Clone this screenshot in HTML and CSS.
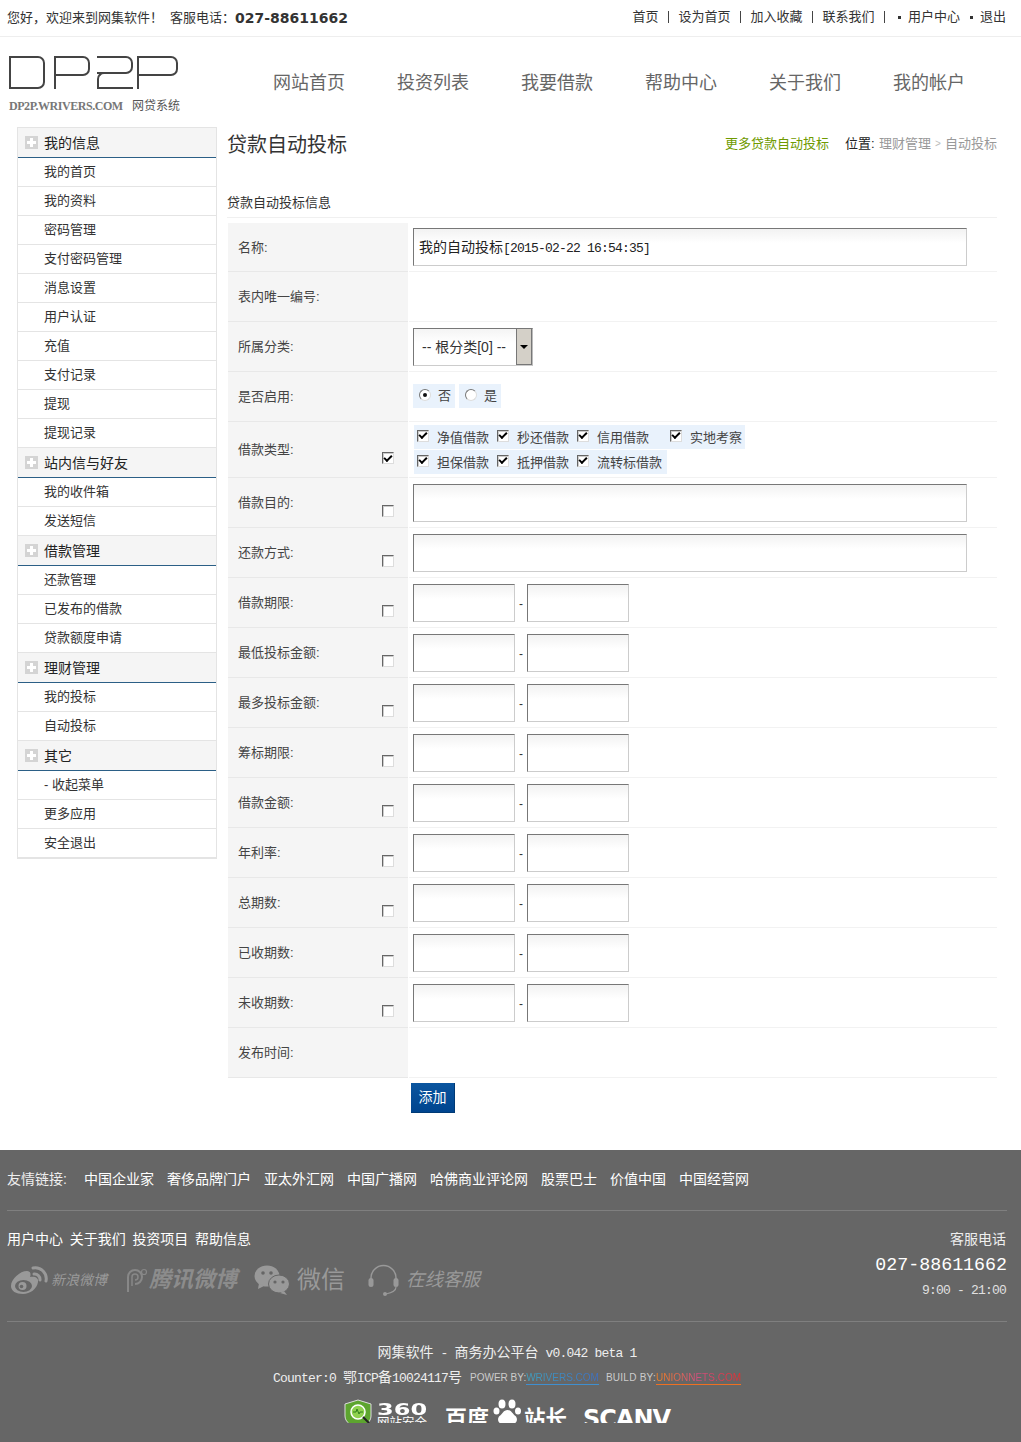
FILE: index.html
```html
<!DOCTYPE html>
<html lang="zh-CN">
<head>
<meta charset="utf-8">
<title>贷款自动投标</title>
<link rel="stylesheet" href="styles.css">
</head>
<body>
<div class="topbar">
  <div class="welcome"><span>您好&#xFF0C;欢迎来到网集软件&#xFF01;</span><span class="tel-label">客服电话&#xFF1A;</span><b class="tel">027-88611662</b></div>
  <div class="toplinks"><a>首页</a><i></i><a>设为首页</a><i></i><a>加入收藏</a><i></i><a>联系我们</a><i></i><a class="dot">用户中心</a><a class="dot">退出</a></div>
</div>
<header class="header">
  <div class="logo">
    <div class="mark" role="img" aria-label="DP2P">
      <span class="l-d"></span>
      <span class="l-p"><span></span></span>
      <span class="l-2"><span class="t"></span><span class="b"></span></span>
      <span class="l-p wide"><span></span></span>
    </div>
    <div class="logo-sub"><b>DP2P.WRIVERS.COM</b><span>网贷系统</span></div>
  </div>
  <nav class="nav"><a>网站首页</a><a>投资列表</a><a>我要借款</a><a>帮助中心</a><a>关于我们</a><a>我的帐户</a></nav>
</header>
<div class="content">
  <aside class="side">
    <h3><i></i>我的信息</h3>
    <a>我的首页</a><a>我的资料</a><a>密码管理</a><a>支付密码管理</a><a>消息设置</a><a>用户认证</a><a>充值</a><a>支付记录</a><a>提现</a><a>提现记录</a>
    <h3><i></i>站内信与好友</h3>
    <a>我的收件箱</a><a>发送短信</a>
    <h3><i></i>借款管理</h3>
    <a>还款管理</a><a>已发布的借款</a><a>贷款额度申请</a>
    <h3 class="teal"><i></i>理财管理</h3>
    <a>我的投标</a><a>自动投标</a>
    <h3 class="teal"><i></i>其它</h3>
    <a>- 收起菜单</a><a>更多应用</a><a>安全退出</a>
  </aside>
  <main class="main">
    <div class="pagehead">
      <h1>贷款自动投标</h1>
      <div class="crumbs"><a class="more">更多贷款自动投标</a><span class="pos">位置:</span><a>理财管理</a><em>&gt;</em><a>自动投标</a></div>
    </div>
    <h2 class="sect">贷款自动投标信息</h2>
    <form class="form">
      <div class="row"><div class="lab">名称:</div><div class="val"><div class="txt long mixed">我的自动投标<span class="mono">[2015-02-22 16:54:35]</span></div></div></div>
      <div class="row"><div class="lab">表内唯一编号:</div><div class="val"></div></div>
      <div class="row"><div class="lab">所属分类:</div><div class="val"><div class="sel"><select><option>-- 根分类[0] --</option></select><span class="arrow"></span></div></div></div>
      <div class="row"><div class="lab">是否启用:</div><div class="val radios"><label class="opt"><input type="radio" name="on" checked>否</label><label class="opt"><input type="radio" name="on">是</label></div></div>
      <div class="row tall"><div class="lab">借款类型:<input class="pick" type="checkbox" checked></div>
        <div class="val checks">
          <div class="cline"><label class="cb"><input type="checkbox" checked>净值借款</label><label class="cb"><input type="checkbox" checked>秒还借款</label><label class="cb w93"><input type="checkbox" checked>信用借款</label><label class="cb end"><input type="checkbox" checked>实地考察</label></div>
          <div class="cline"><label class="cb"><input type="checkbox" checked>担保借款</label><label class="cb"><input type="checkbox" checked>抵押借款</label><label class="cb"><input type="checkbox" checked>流转标借款</label></div>
        </div>
      </div>
      <div class="row"><div class="lab">借款目的:<input class="pick" type="checkbox"></div><div class="val"><input class="txt long" type="text"></div></div>
      <div class="row"><div class="lab">还款方式:<input class="pick" type="checkbox"></div><div class="val"><input class="txt long" type="text"></div></div>
      <div class="row"><div class="lab">借款期限:<input class="pick" type="checkbox"></div><div class="val"><input class="txt" type="text"><span class="dash">-</span><input class="txt" type="text"></div></div>
      <div class="row"><div class="lab">最低投标金额:<input class="pick" type="checkbox"></div><div class="val"><input class="txt" type="text"><span class="dash">-</span><input class="txt" type="text"></div></div>
      <div class="row"><div class="lab">最多投标金额:<input class="pick" type="checkbox"></div><div class="val"><input class="txt" type="text"><span class="dash">-</span><input class="txt" type="text"></div></div>
      <div class="row"><div class="lab">筹标期限:<input class="pick" type="checkbox"></div><div class="val"><input class="txt" type="text"><span class="dash">-</span><input class="txt" type="text"></div></div>
      <div class="row"><div class="lab">借款金额:<input class="pick" type="checkbox"></div><div class="val"><input class="txt" type="text"><span class="dash">-</span><input class="txt" type="text"></div></div>
      <div class="row"><div class="lab">年利率:<input class="pick" type="checkbox"></div><div class="val"><input class="txt" type="text"><span class="dash">-</span><input class="txt" type="text"></div></div>
      <div class="row"><div class="lab">总期数:<input class="pick" type="checkbox"></div><div class="val"><input class="txt" type="text"><span class="dash">-</span><input class="txt" type="text"></div></div>
      <div class="row"><div class="lab">已收期数:<input class="pick" type="checkbox"></div><div class="val"><input class="txt" type="text"><span class="dash">-</span><input class="txt" type="text"></div></div>
      <div class="row"><div class="lab">未收期数:<input class="pick" type="checkbox"></div><div class="val"><input class="txt" type="text"><span class="dash">-</span><input class="txt" type="text"></div></div>
      <div class="row"><div class="lab">发布时间:</div><div class="val"></div></div>
      <button class="submit" type="button">添加</button>
    </form>
  </main>
</div>
<footer class="footer">
  <div class="friends"><span class="f-title">友情链接:</span><a>中国企业家</a><a>奢侈品牌门户</a><a>亚太外汇网</a><a>中国广播网</a><a>哈佛商业评论网</a><a>股票巴士</a><a>价值中国</a><a>中国经营网</a></div>
  <div class="mid">
    <div class="mid-left">
      <div class="flinks"><a>用户中心</a><a>关于我们</a><a>投资项目</a><a>帮助信息</a></div>
      <div class="social">
        <svg class="ic-weibo" width="38" height="30" viewBox="0 0 38 30"><path d="M1 21c0-7 9-15 16-15 4 0 4 4 3 6 5-1 9 1 8 5-1 7-8 12-15 12C6 29 1 26 1 21z" fill="#999"/><ellipse cx="13.500" cy="21" rx="8.500" ry="6" fill="#666"/><circle cx="12.500" cy="21" r="4" fill="#999"/><circle cx="11.500" cy="21.500" r="1.800" fill="#666"/><path d="M23 3a11 11 0 0 1 13 13M24 9a5.500 5.500 0 0 1 6 6" fill="none" stroke="#999" stroke-width="3" stroke-linecap="round"/></svg>
        <span class="s-weibo">新浪微博</span>
        <svg class="ic-qq" width="24" height="26" viewBox="0 0 24 26"><path d="M4 25V10a7 7 0 1 1 7 7" fill="none" stroke="#888" stroke-width="2"/><path d="M8 19V10a3 3 0 1 1 3 3" fill="none" stroke="#888" stroke-width="1.500"/><circle cx="20" cy="5" r="2.500" fill="none" stroke="#888" stroke-width="1.200"/></svg>
        <span class="s-qq">腾讯微博</span>
        <svg class="ic-wx" width="36" height="32" viewBox="0 0 36 32"><ellipse cx="13" cy="12" rx="12.500" ry="10.500" fill="#999"/><path d="M5 19l-1 6 6-3z" fill="#999"/><ellipse cx="25" cy="20" rx="10.500" ry="9" stroke="#666" fill="#999"/><path d="M30 27l3 4-7-2z" fill="#999"/><circle cx="9" cy="9" r="1.800" fill="#666"/><circle cx="17" cy="9" r="1.800" fill="#666"/><circle cx="21" cy="18" r="1.600" fill="#666"/><circle cx="29" cy="18" r="1.600" fill="#666"/></svg>
        <span class="s-wx">微信</span>
        <svg class="ic-hs" width="31" height="32" viewBox="0 0 31 32"><path d="M3 17V14a12.500 12.500 0 0 1 25 0v3" fill="none" stroke="#999" stroke-width="1.500"/><rect x="0.500" y="14" width="5" height="9" rx="2.500" fill="#999"/><rect x="25.500" y="14" width="5" height="9" rx="2.500" fill="#999"/><path d="M28 23c0 4-5 6-10 7" fill="none" stroke="#999" stroke-width="1.200"/><circle cx="17" cy="30" r="2" fill="#999"/></svg>
        <span class="s-hs">在线客服</span>
      </div>
    </div>
    <div class="mid-right"><div class="kf">客服电话</div><div class="kf-num">027-88611662</div><div class="kf-time">9:00 - 21:00</div></div>
  </div>
  <div class="copy">网集软件<span class="mono"> - </span>商务办公平台<span class="mono"> v0.042 beta 1</span></div>
  <div class="counter"><span class="cnt"><span class="mono">Counter:0 </span>鄂<span class="mono">ICP</span>备<span class="mono">10024117</span>号</span><span class="by">POWER BY:</span><a class="wr">WRIVERS.COM</a><span class="by by2">BUILD BY:</span><a class="un">UNIONNETS.COM</a></div>
  <div class="badges">
    <svg width="28" height="28" viewBox="0 0 28 28"><path d="M14 1l13 4v12c0 6-6 10-13 12C7 27 1 23 1 17V5z" fill="#5da52f" stroke="#dcdcdc"/><circle cx="14" cy="13" r="7" fill="#8fd14f" stroke="#fff" stroke-width="1.500"/><path d="M9 13h3l1-3 2 5 1-2h3" fill="none" stroke="#2f7d1c"/><path d="M19 18l6 6" stroke="#222" stroke-width="2"/></svg>
    <div class="b360"><b>360</b><span>网站安全</span></div>
    <b class="bd">百度</b>
    <svg class="paw" width="29" height="28" viewBox="0 0 29 28"><ellipse cx="9" cy="5" rx="3.500" ry="4.500" fill="#fff"/><ellipse cx="19" cy="5" rx="3.500" ry="4.500" fill="#fff"/><ellipse cx="3.500" cy="12" rx="3" ry="3.500" fill="#fff"/><ellipse cx="25" cy="12" rx="3" ry="3.500" fill="#fff"/><path d="M14.500 11c4 0 5 4 8 6 3 3 1 8-3 8-2 0-3-1-5-1s-3 1-5 1c-4 0-6-5-3-8 3-2 4-6 8-6z" fill="#fff"/></svg>
    <b class="zz">站长</b>
    <b class="scan">SCANV</b>
  </div>
</footer>
</body>
</html>
```
FILE: styles.css
```css
* { box-sizing: border-box; }
html, body { margin: 0; padding: 0; }
body {
  background: #fff;
  color: #333;
  font: 13px/20px "Liberation Sans", "Noto Sans CJK SC", sans-serif;
  height: 1442px;
  overflow: hidden;
}
a { color: inherit; text-decoration: none; }
.mono { font-family: "Liberation Mono", monospace; font-size: 13px; letter-spacing: -.8px; white-space: pre; }

/* top bar */
.topbar {
  height: 37px;
  border-bottom: 1px solid #eee;
  display: flex;
  justify-content: space-between;
  align-items: center;
  padding: 0 15px 0 7px;
}
.welcome { display: flex; align-items: center; }
.tel-label { margin-left: 7px; }
.tel { font: bold 14px/20px "DejaVu Sans", sans-serif; color: #333; }
.toplinks { display: flex; align-items: center; margin-top: -2px; }
.toplinks i { width: 1px; height: 12px; background: #444; margin: 0 9.500px; }
.toplinks .dot { display: flex; align-items: center; margin-left: 10px; }
.toplinks .dot::before { content: ""; width: 3px; height: 3px; background: #333; margin-right: 7px; }
.toplinks i + .dot { margin-left: 3.500px; }

/* header */
.header { height: 90px; display: flex; }
.logo { width: 273px; padding: 19px 0 0 9px; flex: none; }
.mark { display: flex; height: 33px; color: #444; }
.mark span { display: block; }
.l-d { width: 36px; height: 33px; border: 2px solid #444; border-radius: 0 7px 7px 0; margin-right: 9px; }
.l-p { width: 36px; height: 33px; border-left: 2px solid #444; margin-right: 7px; }
.l-p > span { height: 20px; border: solid #444; border-width: 2px 2px 2px 0; border-radius: 0 7px 7px 0; }
.l-p.wide { width: 41px; margin-right: 0; }
.l-2 { width: 36px; margin-right: 4px; }
.l-2 .t { height: 18px; border: solid #444; border-width: 2px 2px 2px 0; border-radius: 0 7px 7px 0; }
.l-2 .b { height: 17px; margin-top: -2px; border-bottom: 2px solid #444; }
.l-2 .b::before { content: ""; display: block; width: 20px; height: 15px; border: solid #444; border-width: 2px 0 0 2px; border-radius: 7px 0 0 0; }
.logo-sub { display: flex; align-items: center; margin-top: 9px; height: 16px; color: #555; }
.logo-sub b { font: bold 12px/16px "Liberation Serif", serif; color: #777; width: 123px; white-space: nowrap; letter-spacing: -.45px; }
.logo-sub span { font-size: 12px; }
.nav { display: flex; gap: 52px; padding-top: 34px; font-size: 18px; line-height: 24px; color: #666; }

/* content */
.content { display: flex; padding-left: 17px; align-items: flex-start; height: 1023px; }
.side { width: 200px; flex: none; border: 1px solid #e4e4e4; border-bottom-width: 2px; }
.side h3 {
  margin: 0;
  height: 30px;
  background: #f5f5f5;
  border-bottom: 1px solid #2b5f86;
  font-size: 14px;
  font-weight: normal;
  color: #222;
  display: flex;
  align-items: center;
  padding-left: 7px;
}
.side h3 i {
  width: 13px; height: 13px; margin-right: 6px; flex: none;
  background:
    linear-gradient(#fff, #fff) center / 9px 3px no-repeat,
    linear-gradient(#fff, #fff) center / 3px 9px no-repeat,
    #d4d4d4;
}
.side a { display: block; height: 29px; line-height: 28px; padding-left: 26px; border-bottom: 1px solid #e4e4e4; }
.side a:last-child { border-bottom: 0; height: 28px; }

.main { width: 770px; margin-left: 10px; flex: none; }
.pagehead { height: 60px; display: flex; justify-content: space-between; align-items: flex-start; }
.pagehead h1 { margin: 0; font-size: 20px; line-height: 36px; font-weight: normal; color: #333; }
.crumbs { display: flex; color: #999; line-height: 34px; white-space: nowrap; }
.crumbs .more { color: #6f9a00; margin-right: 16px; }
.crumbs .pos { color: #222; width: 34px; }
.crumbs em { font-style: normal; font-size: 10px; color: #bbb; width: 14px; text-align: center; }
.sect { margin: 0; height: 31px; line-height: 32px; font-size: 13px; font-weight: normal; color: #333; border-bottom: 1px solid #f0f0f0; }
.form { margin: 4px 0 0 1px; }
.row { display: flex; height: 50px; }
.row.tall { height: 56px; }
.row:first-child .lab { border-top: 1px solid #fff; }
.lab {
  width: 180px; flex: none;
  background: #f5f5f5;
  border-bottom: 1px solid #e8e8e8;
  padding: 1px 14px 0 10px;
  display: flex;
  justify-content: space-between;
  align-items: center;
  color: #444;
}
.val { flex: 1; margin-left: 1px; padding: 6px 0 0 4px; border-bottom: 1px solid #f2f2f2; display: flex; align-items: flex-start; }
input, select, button { font-family: inherit; margin: 0; }
.txt {
  width: 102px; height: 38px;
  border: 1px solid; border-color: #777 #ccc #ccc #777;
  background: linear-gradient(#f2f2f2, #fff 14px);
  padding: 0 5px;
  font-size: 14px;
  color: #222;
  border-radius: 0;
  outline: 0;
}
.txt.long { width: 554px; }
.txt.mixed { line-height: 36px; white-space: nowrap; }
.dash { width: 12px; text-align: center; line-height: 40px; font-size: 12px; }
.sel { width: 120px; height: 38px; display: flex; border: 1px solid; border-color: #777 #bbb #ccc #777; }
.sel select {
  flex: 1; min-width: 0;
  appearance: none; border: 0; background: linear-gradient(#f4f4f4, #fff 14px);
  font-size: 14px; padding-left: 8px; color: #333; border-radius: 0; outline: 0;
}
.arrow {
  width: 16px; background: #d4d0c8; flex: none;
  border-left: 1px solid #777; border-right: 1px solid #777; border-bottom: 1px solid #777;
  display: flex; align-items: center; justify-content: center;
}
.arrow::after { content: ""; border: 4px solid transparent; border-top: 4px solid #000; margin-top: 4px; }

.radios { gap: 4px; padding-top: 12px; }
.opt { width: 42px; height: 24px; background: #e9f2fc; display: flex; align-items: center; padding-left: 6px; gap: 7px; color: #444; }
.opt input {
  appearance: none; width: 12px; height: 12px; border-radius: 50%;
  border: 1px solid; border-color: #777 #ddd #ddd #777; background: #fff; flex: none;
  display: flex; align-items: center; justify-content: center; margin-top: -3px;
}
.opt input:checked::after { content: ""; width: 4px; height: 4px; border-radius: 50%; background: #111; }
input[type="checkbox"] {
  appearance: none; width: 12px; height: 12px; flex: none;
  border: 1px solid; border-color: #666 #ddd #ddd #666; background: #fff; box-shadow: inset 1px 1px 0 #ccc;
  display: flex; align-items: center; justify-content: center;
}
input[type="checkbox"]:checked::after {
  content: ""; width: 6px; height: 3px; border: solid #000; border-width: 0 0 2px 2px;
  transform: rotate(-45deg); margin-top: -2px;
}
.pick { margin-top: 16px; }
.checks { flex-direction: column; padding: 3px 0 0 5px; gap: 1px; }
.cline { display: flex; height: 24px; background: #e9f2fc; }
.cb { display: flex; align-items: center; padding: 1px 5px 0 3px; color: #444; white-space: nowrap; }
.cb input { margin-right: 8px; margin-top: -4px; }
.cb.w93 { width: 93px; }
.cb.end { padding-right: 3px; }
.submit {
  display: block; width: 44px; height: 30px; margin: 5px 0 0 183px;
  border: 0; border-bottom: 1px solid #003a75; border-right: 1px solid #003a75;
  background: linear-gradient(#0a559f, #00458f);
  color: #fff; font-size: 14px; padding: 0 0 3px;
}

/* footer */
.footer { background: #666; height: 292px; color: #fff; padding: 0 14px 0 7px; overflow: hidden; }
.friends { height: 61px; border-bottom: 1px solid #7f7f7f; display: flex; font-size: 14px; line-height: 58px; }
.friends a { margin-right: 13px; white-space: nowrap; }
.f-title { width: 77px; color: #eee; }
.mid { height: 111px; border-bottom: 1px solid #7f7f7f; display: flex; justify-content: space-between; }
.flinks { display: flex; gap: 6.700px; font-size: 14px; line-height: 20px; padding-top: 18px; }
.social { display: flex; align-items: center; height: 32px; margin-top: 15px; color: #999; }
.ic-weibo { margin-left: 3px; flex: none; }
.s-weibo { font-size: 14px; font-style: italic; margin-left: 3px; width: 73px; white-space: nowrap; }
.ic-qq { flex: none; }
.s-qq { font-size: 22px; font-style: italic; font-weight: bold; color: #8c8c8c; margin-left: 1px; width: 105px; white-space: nowrap; }
.ic-wx { flex: none; }
.s-wx { font-size: 24px; margin-left: 7px; width: 71px; white-space: nowrap; }
.ic-hs { flex: none; }
.s-hs { font-size: 18.500px; font-style: italic; margin-left: 7px; white-space: nowrap; }
.mid-right { text-align: right; padding-top: 18px; }
.kf { font-size: 14px; line-height: 20px; color: #eee; padding-right: 1px; }
.kf-num { font: 18.300px/26px "Liberation Mono", monospace; margin-top: 3px; }
.kf-time { font: 13px/20px "Liberation Mono", monospace; letter-spacing: -.8px; margin-top: 3px; color: #e0e0e0; padding-right: 1px; }
.copy { text-align: center; font-size: 14px; line-height: 20px; margin-top: 20px; color: #eee; }
.counter { display: flex; justify-content: center; align-items: center; height: 24px; margin-top: 2px; white-space: nowrap; }
.cnt { font-size: 14px; color: #eee; }
.by { font-size: 10px; color: #ccc; margin-left: 8px; }
.by2 { margin-left: 7px; letter-spacing: .25px; }
.wr, .un { font-size: 10px; -webkit-background-clip: text; background-clip: text; color: transparent; line-height: 13px; }
.wr { background-image: linear-gradient(90deg, #3fa0bf, #3f6fc0); border-bottom: 1px solid #3f8fd0; }
.un { background-image: linear-gradient(90deg, #f08020, #d04f80, #e03030); border-bottom: 1px solid #f07020; }
.badges { display: flex; justify-content: center; height: 24px; margin-top: 9px; overflow: hidden; }
.badges > svg { flex: none; }
.b360 { margin-left: 5px; width: 68px; color: #fff; }
.b360 b { display: block; font: bold 16px/15px "DejaVu Sans", sans-serif; padding-top: 3px; transform: scaleX(1.500); transform-origin: left; }
.b360 span { display: block; font-size: 12.500px; line-height: 14px; white-space: nowrap; margin-top: -1px; }
.bd { font-size: 22px; line-height: 30px; margin-top: 5px; white-space: nowrap; }
.paw { margin-left: 4px; flex: none; }
.zz { font-size: 21.500px; line-height: 30px; margin-top: 5px; margin-left: 2px; width: 59px; white-space: nowrap; }
.scan { font: bold 24px/30px "DejaVu Sans", sans-serif; margin-top: 5px; letter-spacing: -1px; white-space: nowrap; }
```
